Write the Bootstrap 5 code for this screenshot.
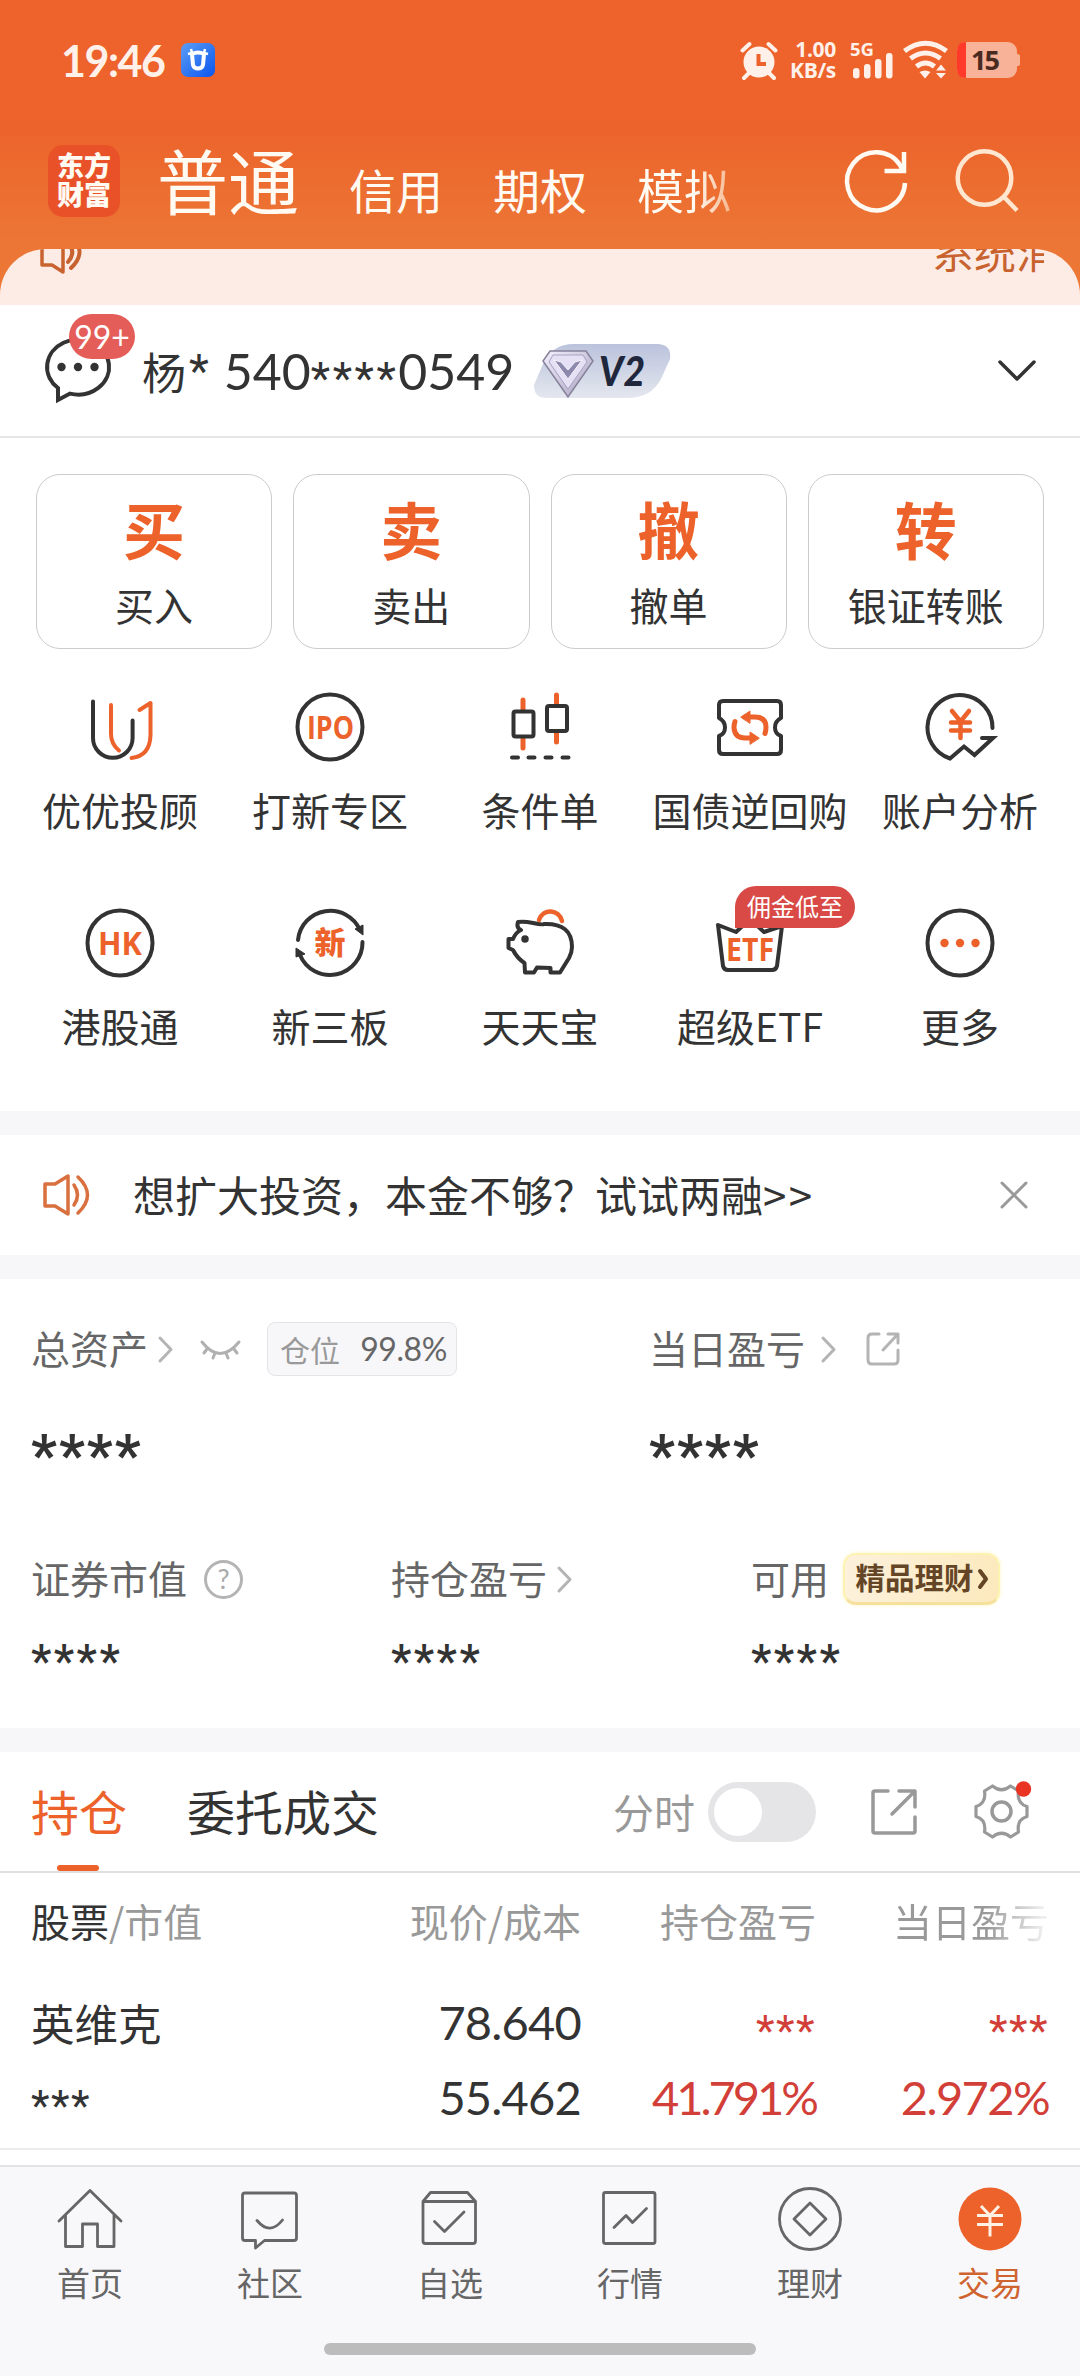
<!DOCTYPE html>
<html lang="zh-CN">
<head>
<meta charset="utf-8">
<meta name="viewport" content="width=device-width, initial-scale=1">
<title>交易</title>
<link rel="stylesheet" href="https://cdn.jsdelivr.net/npm/bootstrap@5.3.0/dist/css/bootstrap.min.css">
<style>
:root{--org:#ec622a;--ink:#333;--g6:#666;--g9:#999;--cjk:"Noto Sans CJK SC",sans-serif;--num:Lato,"Noto Sans CJK SC",sans-serif}
body{width:1080px;height:2376px;overflow:hidden;font-family:var(--cjk);color:var(--ink);font-size:39px;line-height:1;background:#fff}
svg{display:block;flex:none;overflow:visible}
.ln{fill:none;stroke:currentColor;stroke-width:4;stroke-linecap:round;stroke-linejoin:round}
.or{color:var(--org)}
.nm{font-family:var(--num)}
.stars{font-family:Roboto,sans-serif;line-height:1;padding-top:.38em}
.hero{height:305px;background:linear-gradient(#ee632b 0,#ec632b 125px,#ec7635 240px,#ec7836)}
.statusbar{height:120px;padding:0 60px 0 61px;color:#fff1ea}
.clock{font-size:43px;font-weight:700;letter-spacing:-1.5px;width:120px}
.speed{font:700 21px/21px "Open Sans",sans-serif;text-align:right;width:48px;margin:0 15px 0 11px;letter-spacing:-.3px}
.topnav{height:129px;padding-left:48px;color:#fffaf2}
.logo{width:72px;height:72px;border-radius:15px;background:#e95228;font-size:27px;font-weight:900;line-height:29px;padding:5px 0 0;text-align:center;margin-top:-7px}
.tabmain{font-size:71px;margin:-12px 0 0 37px;width:192px}
.tabsub{font-size:47px;width:144px;margin-top:8px}
.tabfade{background:linear-gradient(90deg,#fffaf2 62%,#f6b68c);-webkit-background-clip:text;color:transparent}
.strip{height:56px;border-radius:46px 46px 0 0;background:#fdece5;overflow:hidden;color:#c8632f;padding:0 36px 0 40px}
.striptext{width:112px;overflow:hidden;white-space:nowrap;font-size:42px;line-height:44px;margin-top:-20px}
.acct{height:133px;border-bottom:2px solid #e6e6e6;padding:0 44px 0 45px}
.msgbadge{position:absolute;left:24px;top:-24px;width:66px;height:45px;border-radius:23px;background:#e45d58;color:#fff;font:32px/45px Lato,sans-serif;text-align:center}
.acct .nm{font-size:50px}
.vip{width:136px;height:54px;margin-left:20px}
.trade{height:673px;padding-top:36px}
.quick{padding:0 36px;gap:21px}
.quick a{flex:1;height:175px;border:1.5px solid #ccc;border-radius:24px;color:inherit;text-decoration:none;display:flex;flex-direction:column;align-items:center}
.quick b{color:var(--org);font-size:62px;line-height:70px;margin-top:18px;font-weight:700}
.quick span{line-height:40px;margin-top:21px}
.tiles{padding:36px 15px 0}
.tile{width:210px;height:216px;text-align:center;position:relative;white-space:nowrap}
.tile svg{margin:0 auto 20px}
.tile span{display:block;line-height:40px}
.tile svg text{fill:var(--org);font-weight:700;font-family:"Open Sans",sans-serif}
.tag{position:absolute;left:90px;top:-15px;width:120px;height:42px;border-radius:21px 21px 21px 0;background:#d94a46;color:#fff;font-size:24px;line-height:39px!important}
.band{height:24px;background:#f7f7fa}
.notice{height:120px;padding:0 52px 0 43px;font-size:42px}
.assets{height:449px;padding:43px 32px 0 31px;color:var(--g6)}
.arow{height:54px}
.lb{margin-top:-4px}
.assets .stars{color:var(--ink)}
.bigstars{margin-top:42px;font-size:57px;letter-spacing:2px;font-weight:700}
.midstars{margin-top:19px;font-size:46px;letter-spacing:2.4px;font-weight:500}
.pos{width:190px;height:54px;border:1.5px solid #e4e4e6;border-radius:8px;background:#f7f7fa;font-size:30px;padding:0 9px 0 12px;color:var(--g9)}
.pos .nm{font-size:32px;color:var(--g6);letter-spacing:-.4px}
.gold{width:157px;height:52px;border-radius:13px;border:2px solid #fdf3b0;border-bottom:3px solid #f5e09c;background:linear-gradient(100deg,#fdf1dc,#fce9bd);box-shadow:0 0 4px #fdf6c8;color:#644526;font-size:29.5px;font-weight:700}
.tabs{height:121px;border-bottom:2px solid #e0e0e0;padding:0 51px 0 31px;font-size:48px;position:relative}
.tabs i{position:absolute;left:57px;bottom:0;width:42px;height:6px;border-radius:3px;background:var(--org)}
.toggle{width:108px;height:60px;border-radius:30px;background:#e5e5e7;padding:6px}
.toggle div{width:48px;height:48px;border-radius:50%;background:#fff}
.holdings{height:277px;border-bottom:2px solid #ececec;padding:0 31px 0 31px}
.hr3{display:grid;grid-template-columns:320px 230px 235px 233px;text-align:right;align-items:center}
.hr3>:first-child{text-align:left}
.hr3 .nm{font-size:47px;letter-spacing:-.8px}
.hr3 .pa{letter-spacing:-3px}
.hr3 .pb{letter-spacing:-1.6px}
.hr3 .stars{font-size:43px;letter-spacing:1.5px}
.red{color:#d23f38}
.fadeout{background:linear-gradient(90deg,#999 60%,#eee 96%);-webkit-background-clip:text;color:transparent}
.tabbar{height:211px;border-top:2px solid #e2e2e4;background:#f8f8fb;color:var(--g6);font-size:33px}
.tabbar a{width:180px;text-align:center;color:inherit;text-decoration:none}
.tabbar a.or{color:#cf6430}
.tabbar svg{margin:12px auto 7px}
.tabbar .ln{stroke-width:2.8}
.homebar{width:432px;height:12px;border-radius:6px;background:#bcbcbc;margin:44px auto 0}
</style>
<script src="https://cdn.jsdelivr.net/npm/bootstrap@5.3.0/dist/js/bootstrap.bundle.min.js"></script>
</head>
<body>
<header class="hero">
  <div class="statusbar d-flex align-items-center">
    <div class="clock nm">19:46</div>
    <svg width="34" height="34" viewBox="0 0 34 34"><defs><linearGradient id="bl" x1="0" y1="0" x2="1" y2="1"><stop offset="0" stop-color="#5c9df5"/><stop offset="1" stop-color="#0a55ee"/></linearGradient></defs><rect width="34" height="34" rx="7" fill="url(#bl)"/><path d="M11 11Q17 8 23 11L22 22Q21 25.500 17 25.500T12 22Z" fill="none" stroke="#fff" stroke-width="4"/><path d="M7 11L11 10L10 6M27 11L23 10L24 6" fill="none" stroke="#fff" stroke-width="2.500"/></svg>
    <div class="ms-auto d-flex align-items-center">
      <svg width="36" height="38" viewBox="-18 -20 36 38"><circle r="15.500" cy="1" fill="currentColor"/><path d="M-16.500-10.500L-9.500-17M16.500-10.500L9.500-17M-10 12L-15 17M10 12L15 17" stroke="currentColor" stroke-width="4" stroke-linecap="round"/><path d="M-.5-7V3H7" fill="none" stroke="#ee632b" stroke-width="4"/></svg>
      <div class="speed">1.00<br>KB/s</div>
      <svg width="44" height="38" viewBox="0 0 44 38"><text x="-1" y="15" font-family="Open Sans" font-weight="700" font-size="18.500" fill="currentColor">5G</text><g fill="currentColor"><rect x="2" y="27" width="6.500" height="10.500" rx="3"/><rect x="13" y="23" width="6.500" height="14.500" rx="3"/><rect x="24" y="18" width="6.500" height="19.500" rx="3"/><rect x="35" y="12" width="6.500" height="25.500" rx="3"/></g></svg>
      <svg class="ms-2" width="45" height="38" viewBox="0 0 45 38"><g fill="none" stroke="currentColor" stroke-width="5"><path d="M1.500 10Q22.500-5.500 43.500 10"/><path d="M7.500 17.500Q22.500 6.500 37.500 17.500"/><path d="M13.500 25.500Q22.500 18.500 31.500 25.500"/></g><path d="M16.500 31Q22 28 27.500 31L22 37.500ZM33 29.500L38 23.500L43 29.500ZM33 32L43 32L38 37.500Z" fill="currentColor"/></svg>
      <svg style="margin-left:9px" width="63" height="36" viewBox="0 0 63 36"><rect width="60" height="36" rx="9" fill="#f7b297"/><path d="M60 12Q63 12 63 14V22Q63 24 60 24Z" fill="#f7b297"/><path d="M9 0V36Q0 36 0 27V9Q0 0 9 0" fill="#ff3a2a"/><text x="14" y="28" font-family="Noto Sans" font-weight="700" font-size="27" textLength="29" fill="#4a2b22">15</text></svg>
    </div>
  </div>
  <nav class="topnav d-flex align-items-center">
    <div class="logo">东方<br>财富</div>
    <div class="tabmain">普通</div>
    <div class="tabsub">信用</div>
    <div class="tabsub">期权</div>
    <div class="tabsub"><span class="tabfade">模拟</span></div>
    <svg style="margin:-5px 0 0 63px" width="64" height="64" viewBox="-32 -32 64 64" fill="none" stroke="#fffaf2" stroke-width="4.500"><path d="M29 1A29 29 0 1 1 24-17L27-11"/><path d="M28-30V-11H8.500"/></svg>
    <svg style="margin:-5px 0 0 48px" width="64" height="64" viewBox="-32 -32 64 64" fill="none" stroke="#ffe6d0" stroke-width="4.500"><circle cx="-3.500" cy="-4" r="26.800"/><path d="M16 15L29 28.500"/></svg>
  </nav>
  <div class="strip d-flex justify-content-between">
    <svg style="margin-top:-15px" width="41" height="40" viewBox="0 0 41 40" class="ln"><path d="M2 7H12L23 0V38L12 31H2Z" stroke-width="3.500"/><path d="M27 7Q37 18 28 28M31 2Q48 18 31 34"/></svg>
    <div class="striptext">系统消息</div>
  </div>
</header>

<section class="acct d-flex align-items-center">
  <div class="position-relative">
    <svg width="66" height="66" viewBox="0 0 66 66"><path class="ln" style="stroke-linejoin:miter" d="M13 62V50A31 27.500 0 1 1 25 55.600Z"/><circle cx="16.500" cy="29" r="4.200" fill="#333"/><circle cx="33" cy="29" r="4.200" fill="#333"/><circle cx="49.500" cy="29" r="4.200" fill="#333"/></svg>
    <div class="msgbadge">99+</div>
  </div>
  <div class="d-flex align-items-center" style="margin-left:31px">
    <span style="font-size:44px">杨</span><span class="stars" style="font-size:46px;padding:0 15px 0 3px">*</span><span class="nm">540</span><span class="stars" style="font-size:45px;letter-spacing:2.500px;padding-top:16px">****</span><span class="nm">0549</span>
  </div>
  <svg class="vip" viewBox="0 0 136 54"><defs><linearGradient id="vg" x1="0" y1="0" x2="0" y2="1"><stop offset="0" stop-color="#bbc3dc"/><stop offset="1" stop-color="#e4e7ef"/></linearGradient><linearGradient id="dg" x1="0" y1="0" x2="1" y2="1"><stop offset="0" stop-color="#f4f0fd"/><stop offset="1" stop-color="#a7a0be"/></linearGradient></defs><path d="M40 0H124Q138 1 136 15L127 35Q117 54 94 54H12Q0 54 0 41L9 20Q18 0 40 0Z" fill="url(#vg)"/><path d="M16 7H52L59 17L34 53L9 17Z" fill="url(#dg)" stroke="#86819a" stroke-width="1.500"/><path d="M19 11H49L53 18L34 45L15 18Z" fill="#e6e0f5" stroke="#a8a2c4"/><path d="M20 16L27 18L34 26L41 18L48 16L34 35Z" fill="#8d89ad" stroke="#f6f3ff"/><text x="65" y="42" font-family="Lato" font-size="41" font-style="italic" font-weight="900" textLength="46" lengthAdjust="spacingAndGlyphs" fill="#20263b">V2</text></svg>
  <svg class="ms-auto ln" style="stroke-width:3.500" width="38" height="22" viewBox="0 0 38 22"><path d="M2 2L19 19L36 2"/></svg>
</section>

<main>
<section class="trade">
  <div class="quick d-flex">
    <a><b>买</b><span>买入</span></a><a><b>卖</b><span>卖出</span></a><a><b>撤</b><span>撤单</span></a><a><b>转</b><span>银证转账</span></a>
  </div>
  <div class="tiles d-flex flex-wrap">
    <div class="tile"><svg class="ln" width="84" height="84" viewBox="-42 -42 84 84"><path d="M-27-25.500V11A19.800 19.800 0 0 0 12.600 11V-6.500"/><g stroke="#ec622a"><path d="M-9-22V7Q-9 17-1 23.500M19.500-17L30.500-24V8Q30 29 11.500 31"/></g></svg><span>优优投顾</span></div>
    <div class="tile"><svg width="84" height="84" viewBox="-42 -42 84 84"><circle class="ln" r="32.500"/><text x="-23" y="11.500" font-size="32" textLength="47" lengthAdjust="spacingAndGlyphs">IPO</text></svg><span>打新专区</span></div>
    <div class="tile"><svg class="ln" width="84" height="84" viewBox="-42 -42 84 84"><path stroke="#ec622a" d="M-17-27V-17M-17 11V21M16.500-32V-22M16.500 6V15" stroke-width="5"/><rect x="-26.500" y="-15.500" width="20" height="25" rx="2"/><rect x="7" y="-21" width="20" height="25" rx="2"/><path d="M-28 30.500H-22M-11.500 30.500H-5.500M5.500 30.500H11.500M22.500 30.500H28.500"/></svg><span>条件单</span></div>
    <div class="tile"><svg class="ln" width="84" height="84" viewBox="-42 -42 84 84"><path d="M-27-26H27Q31-26 31-22V-9Q25-6 25 .5T31 9V23Q31 27 27 27H-27Q-31 27-31 23V9Q-25 7-25 .5T-31-9V-22Q-31-26-27-26Z"/><g stroke="#ec622a" stroke-width="5"><path d="M-5-10H5Q16-10 16 0Q16 4 15 6.500M-15-5.500Q-16-3-16 1Q-15 11-5 11H4"/></g><path d="M-9-10L0-16V-4ZM9 11L0 5V17Z" fill="#ec622a" stroke="#ec622a" stroke-width="1"/></svg><span>国债逆回购</span></div>
    <div class="tile"><svg class="ln" width="84" height="84" viewBox="-42 -42 84 84"><path style="stroke-linejoin:miter" d="M32.500 1A32.500 32.500 0 1 0-10 31.500L4 19.500L14.500 28L33 11H22"/><path stroke="#ec622a" stroke-width="4.500" d="M-8-16L.5-5.500L9-16M.5-5V11M-9-4.500H10M-9 3.500H10"/></svg><span>账户分析</span></div>
    <div class="tile"><svg width="84" height="84" viewBox="-42 -42 84 84"><circle class="ln" r="32.500"/><text x="-22" y="11.500" font-size="32" textLength="44" lengthAdjust="spacingAndGlyphs">HK</text></svg><span>港股通</span></div>
    <div class="tile"><svg width="84" height="84" viewBox="-42 -42 84 84"><path class="ln" d="M-32-3A32.500 32.500 0 0 1 30-13M32.500-1A32.500 32.500 0 0 1-30 12"/><path d="M33-8L33-18L25-14ZM-34 5L-34 14L-25 11Z" fill="#333" stroke="#333"/><text x="-15.500" y="11" font-size="31" style="font-family:'Noto Sans CJK SC';font-weight:900">新</text></svg><span>新三板</span></div>
    <div class="tile"><svg class="ln" width="84" height="84" viewBox="-42 -42 84 84"><path d="M-22-21Q-16-22-7-20Q2-18 4-19Q32-20 32 4Q32 9 29 15L20 29.500H10.500V25L-3 24.500L-6 29.500H-15L-15.500 20Q-23 15-27 7L-31.500 5V-4H-27Q-24-11-19-13Q-24-15-22-21Z"/><circle cx="-15" cy="-4" r="2.500" fill="#333" stroke-width="2.500"/><path stroke="#ec622a" stroke-width="4.500" d="M-1-23C3-35 19-34 22-22"/></svg><span>天天宝</span></div>
    <div class="tile"><svg width="84" height="84" viewBox="-42 -42 84 84"><path class="ln" d="M-32-18L-14-11L0-24L14-11L32-17L27 23Q26 27 22 27H-22Q-26 27-27 23Z"/><text x="-24" y="17.500" font-size="32" textLength="48" lengthAdjust="spacingAndGlyphs">ETF</text></svg><span class="tag">佣金低至</span><span>超级ETF</span></div>
    <div class="tile"><svg width="84" height="84" viewBox="-42 -42 84 84"><circle class="ln" r="32.500"/><g fill="#ec622a"><circle cx="-15.500" r="4.200"/><circle r="4.200"/><circle cx="15.500" r="4.200"/></g></svg><span>更多</span></div>
  </div>
</section>
<div class="band"></div>
<section class="notice d-flex align-items-center">
  <svg class="ln" width="47" height="42" viewBox="0 0 47 42" style="color:#d9703f;stroke-width:3.500"><path d="M2 10H12L25 2V40L12 32H2Z"/><path d="M31 11Q38 21 31 31M35 3Q54 21 35 39"/></svg>
  <div style="margin:-2px 0 0 43px">想扩大投资，本金不够？试试两融<span style="letter-spacing:2.500px">&gt;&gt;</span></div>
  <svg class="ms-auto ln" style="color:#999;stroke-width:3" width="28" height="28" viewBox="0 0 28 28"><path d="M2 2L26 26M26 2L2 26"/></svg>
</section>
<div class="band"></div>
<section class="assets">
  <div class="arow d-flex align-items-center">
    <div class="d-flex align-items-center" style="width:618px"><span class="lb">总资产</span>
      <svg class="ln" style="color:#b4b4b4;stroke-width:3;margin-left:10px" width="15" height="25" viewBox="0 0 15 25"><path d="M2 1L13 12.500L2 24"/></svg>
      <svg class="ln" style="color:#b0b0b0;stroke-width:3;margin:2px 0 0 28px" width="39" height="19" viewBox="0 0 39 19"><path d="M1 1Q19 24 38 1M6 8L3 12M14 12L12 17M25 12L27 17M33 8L36 12"/></svg>
      <div class="pos d-flex align-items-center justify-content-between" style="margin-left:27px"><span>仓位</span><span class="nm">99.8%</span></div>
    </div>
    <div class="d-flex align-items-center"><span class="lb">当日盈亏</span>
      <svg class="ln" style="color:#b4b4b4;stroke-width:3;margin-left:16px" width="15" height="25" viewBox="0 0 15 25"><path d="M2 1L13 12.500L2 24"/></svg>
      <svg class="ln" style="color:#b4b4b4;stroke-width:3;margin-left:30px" width="34" height="34" viewBox="0 0 34 34"><path d="M13 2H6Q2 2 2 6V28Q2 32 6 32H28Q32 32 32 28V18M22 2H32V11M32 2L17 18"/></svg>
    </div>
  </div>
  <div class="arow bigstars d-flex align-items-center"><div class="stars" style="width:618px">****</div><div class="stars">****</div></div>
  <div class="arow d-flex align-items-center" style="margin-top:80px">
    <div class="d-flex align-items-center" style="width:360px"><span class="lb">证券市值</span>
      <svg style="margin-left:17px" width="39" height="39" viewBox="0 0 39 39"><circle cx="19.500" cy="19.500" r="18" fill="none" stroke="#b4b4b4" stroke-width="3"/><text x="19.500" y="29" text-anchor="middle" font-family="Lato" font-size="27" fill="#aaa">?</text></svg></div>
    <div class="d-flex align-items-center" style="width:360px"><span class="lb">持仓盈亏</span>
      <svg class="ln" style="color:#b4b4b4;stroke-width:3;margin-left:10px" width="15" height="25" viewBox="0 0 15 25"><path d="M2 1L13 12.500L2 24"/></svg></div>
    <div class="d-flex align-items-center"><span class="lb">可用</span>
      <div class="gold d-flex align-items-center justify-content-center" style="margin-left:14px"><span style="margin-top:-4px">精品理财</span><svg class="ln" width="10" height="20" viewBox="0 0 10 20" style="margin-left:4px"><path d="M2 2L8 10L2 18"/></svg></div></div>
  </div>
  <div class="arow midstars d-flex align-items-center"><div class="stars" style="width:360px">****</div><div class="stars" style="width:360px">****</div><div class="stars">****</div></div>
</section>
<div class="band"></div>
<section class="tabs d-flex align-items-center">
  <div class="or lb" style="width:156px">持仓</div><div class="lb">委托成交</div><i></i>
  <div class="ms-auto" style="font-size:41px;color:#999">分时</div>
  <div class="toggle" style="margin-left:13px"><div></div></div>
  <svg class="ln" style="color:#999;stroke-width:3.500;margin-left:55px" width="46" height="46" viewBox="0 0 46 46"><path d="M17 2H4Q2 2 2 4V42Q2 44 4 44H42Q44 44 44 42V28M28 2H44V18M43 3L21 25"/></svg>
  <svg style="margin-left:57px" width="55" height="55" viewBox="-27.500 -27.500 55 55"><path fill="none" stroke="#999" stroke-width="3.200" stroke-linejoin="round" d="M-9-25.500Q0-18 9-25.500L17-20.500Q15-8 25.500-5V5Q15 8 17 20.500L9 25.500Q0 18-9 25.500L-17 20.500Q-15 8-25.500 5V-5Q-15-8-17-20.500Z"/><circle r="9.500" fill="none" stroke="#999" stroke-width="3.500"/><circle cx="22" cy="-22.500" r="7.700" fill="#e93323"/></svg>
</section>
<section class="holdings">
  <div class="hr3" style="height:95px;color:#999"><div><span style="color:#333">股票</span>/市值</div><div>现价/成本</div><div>持仓盈亏</div><div><span class="fadeout">当日盈亏</span></div></div>
  <div class="hr3" style="height:109px"><div style="font-size:43.500px">英维克</div><div class="nm">78.640</div><div class="red stars">***</div><div class="red stars">***</div></div>
  <div class="hr3" style="height:40px;margin-top:-9px"><div class="stars">***</div><div class="nm">55.462</div><div class="nm red pa">41.791%</div><div class="nm red pb">2.972%</div></div>
</section>
</main>
<div style="height:15px"></div>
<footer class="tabbar">
  <div class="d-flex">
    <a><svg width="80" height="80" viewBox="-40 -40 80 80" class="ln"><path d="M-31 2L0-28.500L31 2M-24.500-4V27.500H-7.500V5H7.500V27.500H24V-4"/></svg>首页</a>
    <a><svg width="80" height="80" viewBox="-40 -40 80 80" class="ln"><path d="M-25-26H24Q26.500-26 26.500-23.500V19Q26.500 21.500 24 21.500H-5.500L-14.500 29V21.500H-25Q-27.500 21.500-27.500 19V-23.500Q-27.500-26-25-26ZM-13 1.500Q0 17 12.500 1"/></svg>社区</a>
    <a><svg width="80" height="80" viewBox="-40 -40 80 80" class="ln"><path d="M-27-17.500L-19.500-26.500H17.500L25.500-17.500V22Q25.500 24.500 23 24.500H-24.500Q-27 24.500-27 22ZH25.500M-15.500 2.500L-5.500 12.500L14-7"/></svg>自选</a>
    <a><svg width="80" height="80" viewBox="-40 -40 80 80" class="ln"><rect x="-26.500" y="-26.500" width="51.500" height="51" rx="2"/><path d="M-16 8.500L-4-3.500L2.500 3.500L16.500-10.500"/></svg>行情</a>
    <a><svg width="80" height="80" viewBox="-40 -40 80 80" class="ln"><circle r="30.500"/><path d="M0-16L16 0L0 16L-16 0Z"/></svg>理财</a>
    <a class="or"><svg width="80" height="80" viewBox="-40 -40 80 80"><circle r="31.500" fill="#ec622a"/><path d="M-9-13L0-3.500L9-13M0-3.500V17.500M-13-3.500H13M-13 5.500H13" fill="none" stroke="#fff1e4" stroke-width="3"/></svg>交易</a>
  </div>
  <div class="homebar"></div>
</footer>
</body>
</html>
